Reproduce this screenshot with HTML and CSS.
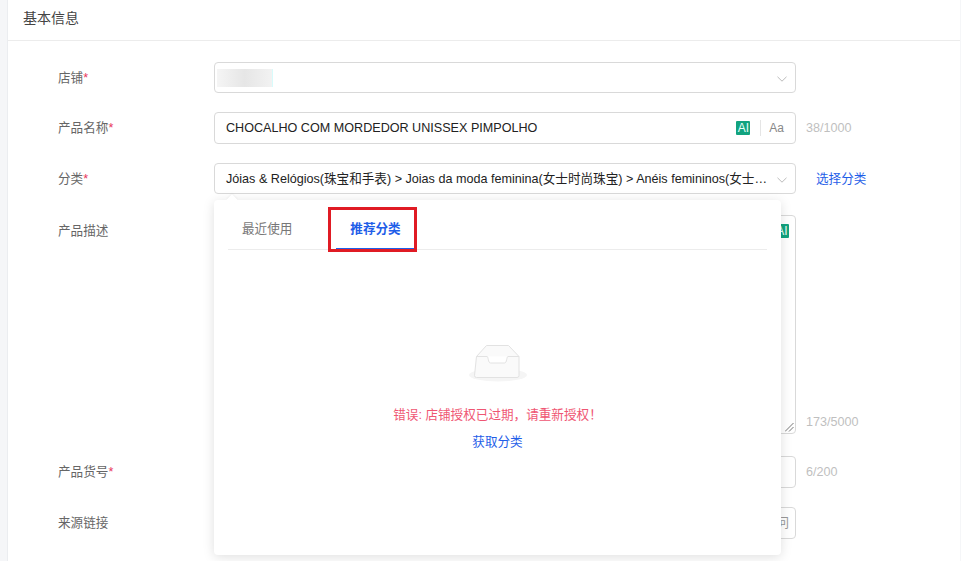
FILE: index.html
```html
<!DOCTYPE html>
<html lang="zh">
<head>
<meta charset="utf-8">
<title>基本信息</title>
<link rel="stylesheet" href="styles.css">
</head>
<body>
<main class="card">
  <header class="card-head">基本信息</header>
  <form class="form">
    <div class="row row-1">
      <label class="label">店铺<i>*</i></label>
      <div class="control select"><span class="blur"></span><svg class="chev" viewBox="0 0 10 6"><path d="M.5.8 5 5.2 9.5.8"/></svg></div>
    </div>
    <div class="row row-2">
      <label class="label">产品名称<i>*</i></label>
      <div class="control"><span class="value">CHOCALHO COM MORDEDOR UNISSEX PIMPOLHO</span><span class="ai">AI</span><span class="sep"></span><span class="aa">Aa</span></div>
      <span class="count">38/1000</span>
    </div>
    <div class="row row-3">
      <label class="label">分类<i>*</i></label>
      <div class="control select"><span class="value">Jóias &amp; Relógios(珠宝和手表) &gt; Joias da moda feminina(女士时尚珠宝) &gt; Anéis femininos(女士…</span><svg class="chev" viewBox="0 0 10 6"><path d="M.5.8 5 5.2 9.5.8"/></svg></div>
      <a class="link pick">选择分类</a>
    </div>
    <div class="row row-4">
      <label class="label">产品描述</label>
      <div class="control area"><span class="ai ai-area">AI</span><svg class="grip" viewBox="0 0 9 9"><path d="M0 8.500 8.500 0M4 8.500 8.500 4"/></svg></div>
      <span class="count count-end">173/5000</span>
    </div>
    <div class="row row-5">
      <label class="label">产品货号<i>*</i></label>
      <div class="control"></div>
      <span class="count">6/200</span>
    </div>
    <div class="row row-6">
      <label class="label">来源链接</label>
      <div class="control end"><span class="visit">访问</span></div>
    </div>
  </form>
  <section class="pop">
    <span class="arrow"></span>
    <nav class="tabs">
      <span class="tab">最近使用</span>
      <span class="tab tab-on">推荐分类</span>
    </nav>
    <div class="empty">
      <svg class="box" width="58" height="37" viewBox="0 0 58 37">
        <ellipse cx="29" cy="30" rx="29" ry="6.500" fill="#f5f5f5"/>
        <path d="M7.500 11.500 17.500.5h22l10.500 11v19a2 2 0 0 1-2 2h-40.500a2 2 0 0 1-2-2z" fill="#fafafa" stroke="#e2e2e2"/>
        <path d="M7.500 11.500H18c1.500 0 1 6.500 3.500 6.500h14c2.500 0 2-6.500 3.500-6.500h11" fill="#fff" stroke="#e2e2e2"/>
      </svg>
      <p class="err">错误: 店铺授权已过期，请重新授权！</p>
      <a class="link fetch">获取分类</a>
    </div>
  </section>
</main>
</body>
</html>
```

FILE: styles.css
```css
*, *::after { box-sizing: border-box; }
html, body { margin: 0; height: 561px; overflow: hidden; }
body {
  background: #f5f6f8;
  padding-left: 8px;
  font: 12.600px/20px "Liberation Sans", "Noto Sans CJK SC", sans-serif;
  color: #333;
}
.card {
  position: relative;
  width: 953px;
  height: 561px;
  background: #fff;
  border-left: 1px solid #ebedf0;
  margin-left: -1px;
}
.card-head {
  height: 41px;
  padding: 8px 0 0 15px;
  font-size: 14px;
  line-height: 20px;
  color: #444;
  border-bottom: 1px solid #ececec;
}
.form { padding: 21px 0 0 50px; }
.row { display: flex; align-items: center; }
.row-2 { margin-top: 19px; }
.row-3 { margin-top: 19px; }
.row-4 { margin-top: 21px; align-items: flex-start; }
.row-5 { margin-top: 22px; }
.row-6 { margin-top: 19px; }
.label { width: 156px; flex: none; color: #666; }
.label i { color: #e8365d; font-style: normal; }
.row-4 .label { padding-top: 6px; }
.control {
  width: 582px;
  height: 32px;
  flex: none;
  display: flex;
  align-items: center;
  padding: 0 11px;
  border: 1px solid #d9d9d9;
  border-radius: 4px;
  background: #fff;
  color: #222;
}
.select { height: 31px; }
.value { flex: 1; min-width: 0; white-space: nowrap; }
.chev { width: 10px; height: 6px; flex: none; margin: 3px -3px 0 auto; fill: none; stroke: #bbb; stroke-width: 1; }
.blur {
  width: 56px;
  height: 18px;
  margin-left: -9px;
  background: linear-gradient(90deg, #f5f5f5, #e6e6e6 50%, #f2f2f2);
  border-right: 1px solid #d8fbfb;
}
.ai {
  width: 14px;
  height: 14px;
  flex: none;
  border-radius: 1px;
  background: #12a37f;
  color: #e8fff8;
  font-size: 12px;
  line-height: 14px;
  text-align: center;
}
.sep { width: 1px; height: 16px; margin: 0 8px 0 10px; background: #e5e5e5; flex: none; }
.aa { color: #888; flex: none; font-size: 12px; }
.count { margin-left: 10px; color: #bfbfbf; }
.count-end { align-self: flex-end; margin-bottom: 2px; }
.link { color: #1f5ee8; cursor: pointer; }
.pick { margin-left: 20px; }
.area { position: relative; height: 219px; align-items: flex-start; }
.ai-area { position: absolute; top: 8px; right: 6px; }
.grip { position: absolute; right: 1px; bottom: 1px; width: 9px; height: 9px; fill: none; stroke: #777; stroke-width: 1; }
.end { justify-content: flex-end; }
.visit { color: #999; margin-right: -5px; }
.pop {
  position: absolute;
  left: 206px;
  top: 200px;
  width: 567px;
  height: 355px;
  background: #fff;
  border-radius: 4px;
  box-shadow: 0 2px 12px rgba(0, 0, 0, .13);
  padding: 0 14px;
}
.arrow {
  position: absolute;
  left: 14px;
  top: -4px;
  width: 8px;
  height: 8px;
  background: #fff;
  transform: rotate(45deg);
  box-shadow: -1px -1px 2px rgba(0, 0, 0, .04);
}
.tabs {
  position: relative;
  display: flex;
  height: 50px;
  border-bottom: 1px solid #ececec;
}
.tab { width: 108px; padding: 19px 0 0 14px; color: #777; flex: none; }
.tab-on {
  padding-left: 0;
  text-align: center;
  color: #1f5ee8;
  font-weight: 700;
  height: 50px;
  width: 79px;
  border-bottom: 2px solid #1f5ee8;
}
.tab-on::after {
  content: "";
  position: absolute;
  left: 100px;
  top: 7px;
  width: 89px;
  height: 45px;
  border: 3px solid #e01b24;
}
.empty { display: flex; flex-direction: column; align-items: center; padding-top: 95px; }
.box { display: block; }
.err { margin: 23px 0 0; color: #ef5673; }
.fetch { margin-top: 7px; }
```
